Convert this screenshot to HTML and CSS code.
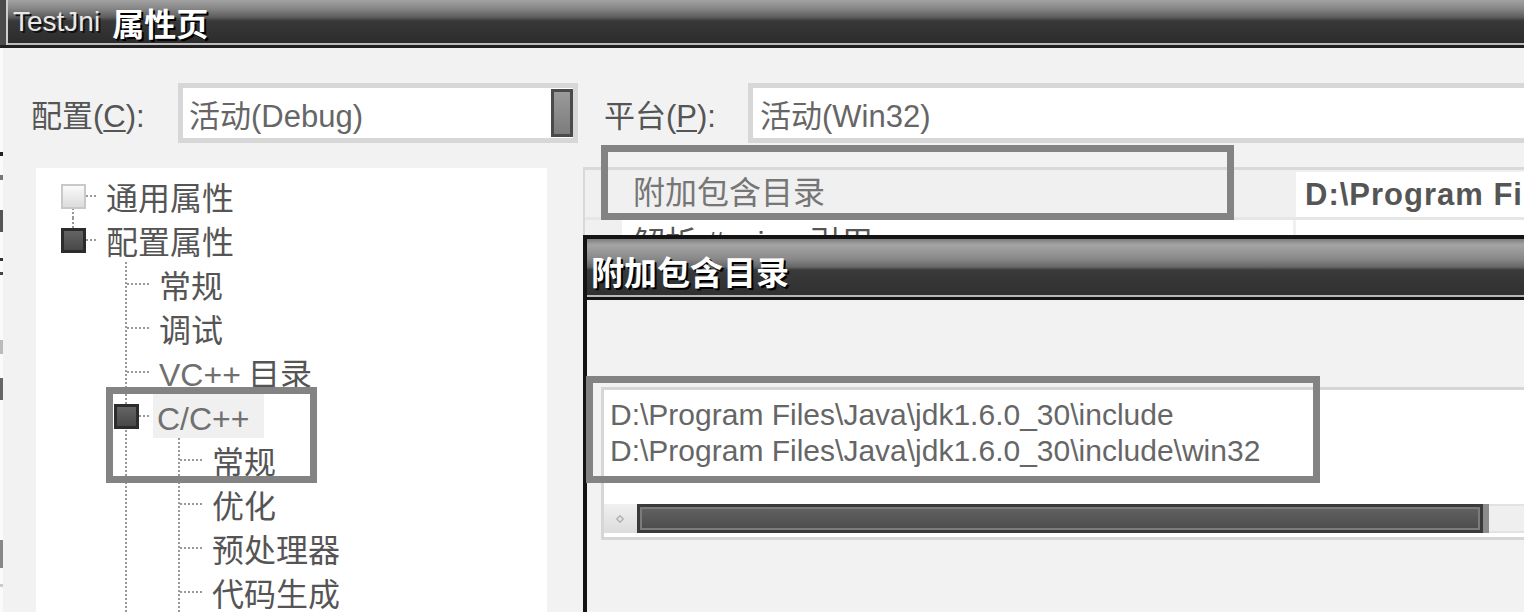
FILE: index.html
```html
<!DOCTYPE html>
<html lang="zh-CN">
<head>
<meta charset="utf-8">
<title>TestJni 属性页</title>
<link rel="stylesheet" href="styles.css">
</head>
<body>
<div class="screen">
  <div class="titlebar"><span class="t-latin">TestJni</span><span class="t-cjk">属性页</span></div>
  <div class="below">
    <div class="edge"></div>
    <div class="content">
      <div class="cfg-row">
        <span class="cfg-label">配置(<u>C</u>):</span>
        <div class="combo combo-cfg"><span class="combo-text">活动(Debug)</span><span class="combo-btn"></span></div>
        <span class="cfg-label plat">平台(<u>P</u>):</span>
        <div class="combo combo-plat"><span class="combo-text">活动(Win32)</span></div>
      </div>
      <div class="panes">
        <div class="tree">
          <div class="node"><span class="g c down"><span class="box light"></span></span><span class="lbl">通用属性</span></div>
          <div class="node"><span class="g c up"><span class="box dark"></span></span><span class="lbl">配置属性</span></div>
          <div class="node"><span class="g"></span><span class="g c"></span><span class="lbl">常规</span></div>
          <div class="node"><span class="g"></span><span class="g c"></span><span class="lbl">调试</span></div>
          <div class="node"><span class="g"></span><span class="g c"></span><span class="lbl"><span class="lat">VC++</span> 目录</span></div>
          <div class="node"><span class="g"></span><span class="g c"><span class="box dark"></span></span><span class="lbl sel"><span class="lat">C/C++</span></span></div>
          <div class="node"><span class="g"></span><span class="g v"></span><span class="g c"></span><span class="lbl">常规</span></div>
          <div class="node"><span class="g"></span><span class="g v"></span><span class="g c"></span><span class="lbl">优化</span></div>
          <div class="node"><span class="g"></span><span class="g v"></span><span class="g c"></span><span class="lbl">预处理器</span></div>
          <div class="node"><span class="g"></span><span class="g v"></span><span class="g c"></span><span class="lbl">代码生成</span></div>
          <div class="mark mark-tree"></div>
        </div>
        <div class="props">
          <div class="grid">
            <div class="grow">
              <div class="gname">附加包含目录</div>
              <div class="gval">D:\Program Files\Java\jdk1.6.0_30\include;D:\Program Files\Java\jdk1.6.0_30\include\win32</div>
            </div>
            <div class="grow sub">
              <div class="gname">解析 #using 引用</div>
              <div class="gval"></div>
            </div>
          </div>
          <div class="mark mark-grid"></div>
          <div class="dialog">
            <div class="dlg-title">附加包含目录</div>
            <div class="dlg-body">
              <div class="edit">
                <div class="lines">
                  <div>D:\Program Files\Java\jdk1.6.0_30\include</div>
                  <div>D:\Program Files\Java\jdk1.6.0_30\include\win32</div>
                </div>
                <div class="hscroll">
                  <span class="sb-btn"><svg width="8" height="8" viewBox="0 0 8 8"><path d="M4 0.8 L7.2 4 L4 7.2 L0.8 4 Z" fill="none" stroke="#b2b2b2" stroke-width="1.4"/></svg></span>
                  <span class="sb-thumb"></span>
                  <span class="sb-edge"></span>
                  <span class="sb-track"></span>
                </div>
              </div>
            </div>
            <div class="mark mark-edit"></div>
          </div>
        </div>
      </div>
    </div>
  </div>
</div>
</body>
</html>
```
FILE: styles.css
```css
* { box-sizing: border-box; margin: 0; padding: 0; }
html, body { width: 1524px; height: 612px; overflow: hidden; }
body {
  background: #f2f2f2;
  font-family: "Liberation Sans", "Noto Sans CJK SC", sans-serif;
  color: #585858;
}
.screen { width: 1524px; height: 612px; overflow: hidden; display: flex; flex-direction: column; }

/* window title */
.titlebar {
  height: 48px; flex: none;
  display: flex; align-items: center;
  padding: 0 0 4px 13px;
  white-space: nowrap;
  background: linear-gradient(to bottom, #a2a2a2 0px, #848484 9px, #5e5e5e 17px, #383838 21px, #2c2c2c 43px);
  box-shadow: inset 0 -3px #1f1f1f, inset 6px 0 #4a4a4a, inset 8px 0 #cdcdcd, inset 0 -5px #bcbcbc;
}
.t-latin { font-size: 28px; color: #e8e8e8; text-shadow: 2px 2px 0 #111; }
.t-cjk {
  font-family: "Noto Sans CJK SC", sans-serif;
  font-size: 32px; font-weight: 700; color: #fff;
  text-shadow: 2px 2px 0 #000; margin-left: 12px;
}

.below { flex: 1; display: flex; min-height: 0; }
.edge {
  width: 3px; flex: none;
  background: linear-gradient(to bottom,
    #fafafa 0 104px, #222 104px 108px, #fafafa 108px 127px, #777 127px 132px,
    #fafafa 132px 162px, #555 162px 184px, #fafafa 184px 210px, #333 210px 213px,
    #fafafa 213px 224px, #444 224px 227px, #fafafa 227px 292px, #bbb 292px 306px,
    #fafafa 306px 330px, #666 330px 352px, #fafafa 352px 492px, #888 492px 520px,
    #fafafa 520px 536px, #ccc 536px 539px, #fafafa 539px);
}
.content { flex: 1; min-width: 0; padding-top: 35px; display: flex; flex-direction: column; }

/* configuration row */
.cfg-row { display: flex; align-items: center; height: 60px; padding-left: 28px; flex: none; }
.cfg-label { width: 147px; flex: none; font-size: 31px; color: #555; white-space: nowrap; }
.cfg-label u { text-decoration-thickness: 2px; text-underline-offset: 3px; }
.cfg-label.plat { margin-left: 26px; width: 144px; }
.combo {
  height: 60px; border: 5px solid #d7d7d7; background: #fff;
  display: flex; align-items: center;
  font-size: 31px; color: #666; white-space: nowrap; overflow: hidden;
}
.combo-cfg { width: 400px; flex: none; padding-left: 6px; }
.combo-plat { flex: 1; margin-right: -40px; padding-left: 7px; }
.combo-btn {
  margin-left: auto; width: 22px; height: 48px; flex: none;
  border: 3px solid #4a4a4a;
  background: linear-gradient(#9a9a9a, #7c7c7c);
}

/* panes */
.panes { flex: 1; display: flex; margin-top: 24px; min-height: 0; }
.tree {
  position: relative; flex: none;
  width: 511px; margin-left: 33px; margin-top: 1px;
  background: #fff; padding-top: 6px;
}
.node { display: flex; height: 44px; }
.g { position: relative; width: 53px; flex: none; }
.g.v::before, .g.c::before {
  content: ""; position: absolute; left: 36px; top: 0; bottom: 0; width: 2px;
  background: repeating-linear-gradient(to bottom, #989898 0 2px, transparent 2px 4px);
}
.g.c.down::before { top: 22px; }
.g.c.up::before { bottom: 22px; }
.g.c::after {
  content: ""; position: absolute; left: 38px; top: 21px; width: 24px; height: 2px;
  background: repeating-linear-gradient(to right, #989898 0 2px, transparent 2px 4px);
}
.box { position: absolute; left: 25px; top: 10px; width: 25px; height: 25px; z-index: 1; }
.box.light { border: 2px solid #c9c9c9; background: linear-gradient(#fafafa, #dcdcdc); }
.box.dark { border: 3px solid #2c2c2c; background: linear-gradient(#646464, #484848); }
.lbl {
  padding-left: 17px; font-size: 32px; line-height: 44px; color: #555; white-space: nowrap;
  font-family: "Noto Sans CJK SC", sans-serif;
}
.lbl .lat { font-family: "Liberation Sans", sans-serif; color: #707070; }
.lbl.sel { margin-left: 11px; padding: 0 15px 0 4px; background: #f0f0f0; }

.props { position: relative; flex: 1; margin-left: 36px; margin-right: -40px; }
.grid { border-top: 3px solid #d9d9d9; border-left: 2px solid #d9d9d9; background: #f0f0f0; }
.grow { display: flex; height: 47px; }
.grow.sub { height: 50px; border-top: 3px solid #e6e6e6; }
.gname {
  width: 708px; flex: none; padding-left: 48px;
  font-size: 32px; line-height: 47px; color: #767676;
  white-space: nowrap; overflow: hidden;
}
.grow.sub .gname { margin-left: 37px; width: 671px; padding-left: 11px; background: #fff; color: #555; }
.gval {
  flex: 1; margin: 2px 0 0 3px; background: #fff; padding-left: 9px;
  font-size: 31px; line-height: 45px; font-weight: 700; color: #555; letter-spacing: 1px;
  white-space: nowrap; overflow: hidden;
}
.grow.sub .gval { margin-top: 0; }

/* annotation frames */
.mark { position: absolute; border: 7px solid #838383; z-index: 5; }
.mark-tree { left: 70px; top: 219px; width: 211px; height: 96px; }
.mark-grid { left: 18px; top: -22px; width: 633px; height: 75px; }
.mark-edit { left: -1px; top: 137px; width: 734px; height: 107px; }

/* dialog */
.dialog {
  position: absolute; left: 0; top: 68px; right: 0; bottom: -20px; z-index: 10;
  border-left: 4px solid #141414; border-top: 4px solid #141414;
  background: #f2f2f2;
}
.dlg-title {
  height: 61px; padding: 8px 0 5px 4px;
  display: flex; align-items: center;
  font-family: "Noto Sans CJK SC", sans-serif;
  font-size: 33px; font-weight: 700; color: #fff;
  text-shadow: 2px 2px 0 #000;
  background: linear-gradient(to bottom, #7d7d7d 0px, #a5a5a5 6px, #888 20px, #666 28px, #3a3a3a 31px, #303030 56px);
  box-shadow: inset 0 -3px #141414, inset 0 -5px #b8b8b8;
}
.dlg-body { padding: 87px 0 0 14px; }
.edit { border: 3px solid #d6d6d6; border-right: 0; background: #fff; padding: 7px 0 4px 0; }
.lines { padding-left: 6px; font-size: 30px; line-height: 36px; color: #666; white-space: nowrap; }
.hscroll { margin-top: 35px; height: 29px; display: flex; }
.sb-btn {
  width: 33px; flex: none; display: flex; align-items: center; justify-content: center;
  padding-right: 2px; background: linear-gradient(#f0f0f0, #dcdcdc);
}
.sb-thumb {
  width: 846px; flex: none;
  border: 3px solid #3a3a3a;
  background: linear-gradient(#626262, #4c4c4c);
  box-shadow: inset 0 0 0 2px #7c7c7c;
}
.sb-edge { width: 6px; flex: none; background: #8c8c8c; }
.sb-track { flex: 1; background: #efefef; border-top: 2px solid #e2e2e2; border-bottom: 2px solid #e2e2e2; }
```
